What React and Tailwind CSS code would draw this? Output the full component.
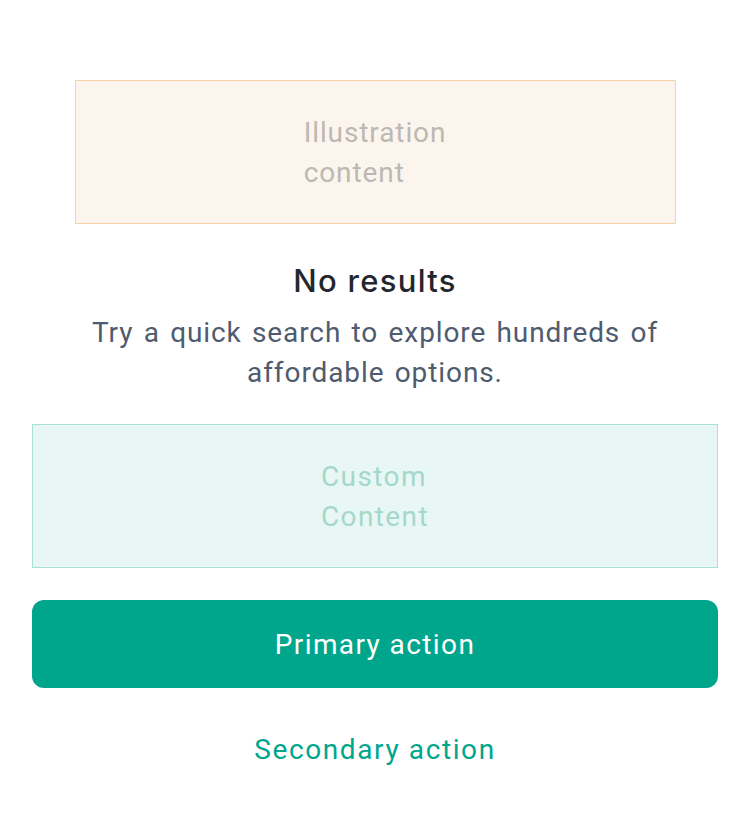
export default function App() {
  return (
    <div className="w-[750px] h-[824px] bg-white px-8 pt-20" style={{ fontFamily: "Roboto, 'Noto Sans', sans-serif" }}>
      <div className="mx-auto flex h-[144px] w-[601px] items-center justify-center border border-[#f5d3a6] bg-[#fcf5ee]">
        <div className="pt-[2px] text-[28px] leading-[40px] tracking-[0.9px] text-[#bcb8b2]">
          <div>Illustration</div>
          <div>content</div>
        </div>
      </div>
      <h1 className="mt-[37px] text-center text-[31px] leading-[40px] font-medium tracking-[1.3px] text-[#23272d]" style={{ fontFamily: "Inter, Roboto, sans-serif" }}>No results</h1>
      <p className="mt-3 px-[40px] text-center text-[28px] leading-[40px] tracking-[0.9px] [word-spacing:2.5px] text-[#4f5b6e]">
        Try a quick search to explore hundreds of affordable options.
      </p>
      <div className="mt-[31px] flex h-[144px] w-full items-center justify-center border border-[#a9e1d6] bg-[#e9f7f4]">
        <div className="pt-[2px] text-[28px] leading-[40px] tracking-[1.4px] text-[#a5d8cc]">
          <div>Custom</div>
          <div>Content</div>
        </div>
      </div>
      <button className="mt-8 flex h-[88px] w-full items-center justify-center rounded-xl bg-[#00a68c] pt-[2px] text-[28px] tracking-[1.4px] text-white">
        Primary action
      </button>
      <button className="mt-10 block h-[40px] w-full pt-[2px] text-center text-[28px] leading-[40px] tracking-[1.6px] text-[#00a68c]">
        Secondary action
      </button>
    </div>
  );
}
